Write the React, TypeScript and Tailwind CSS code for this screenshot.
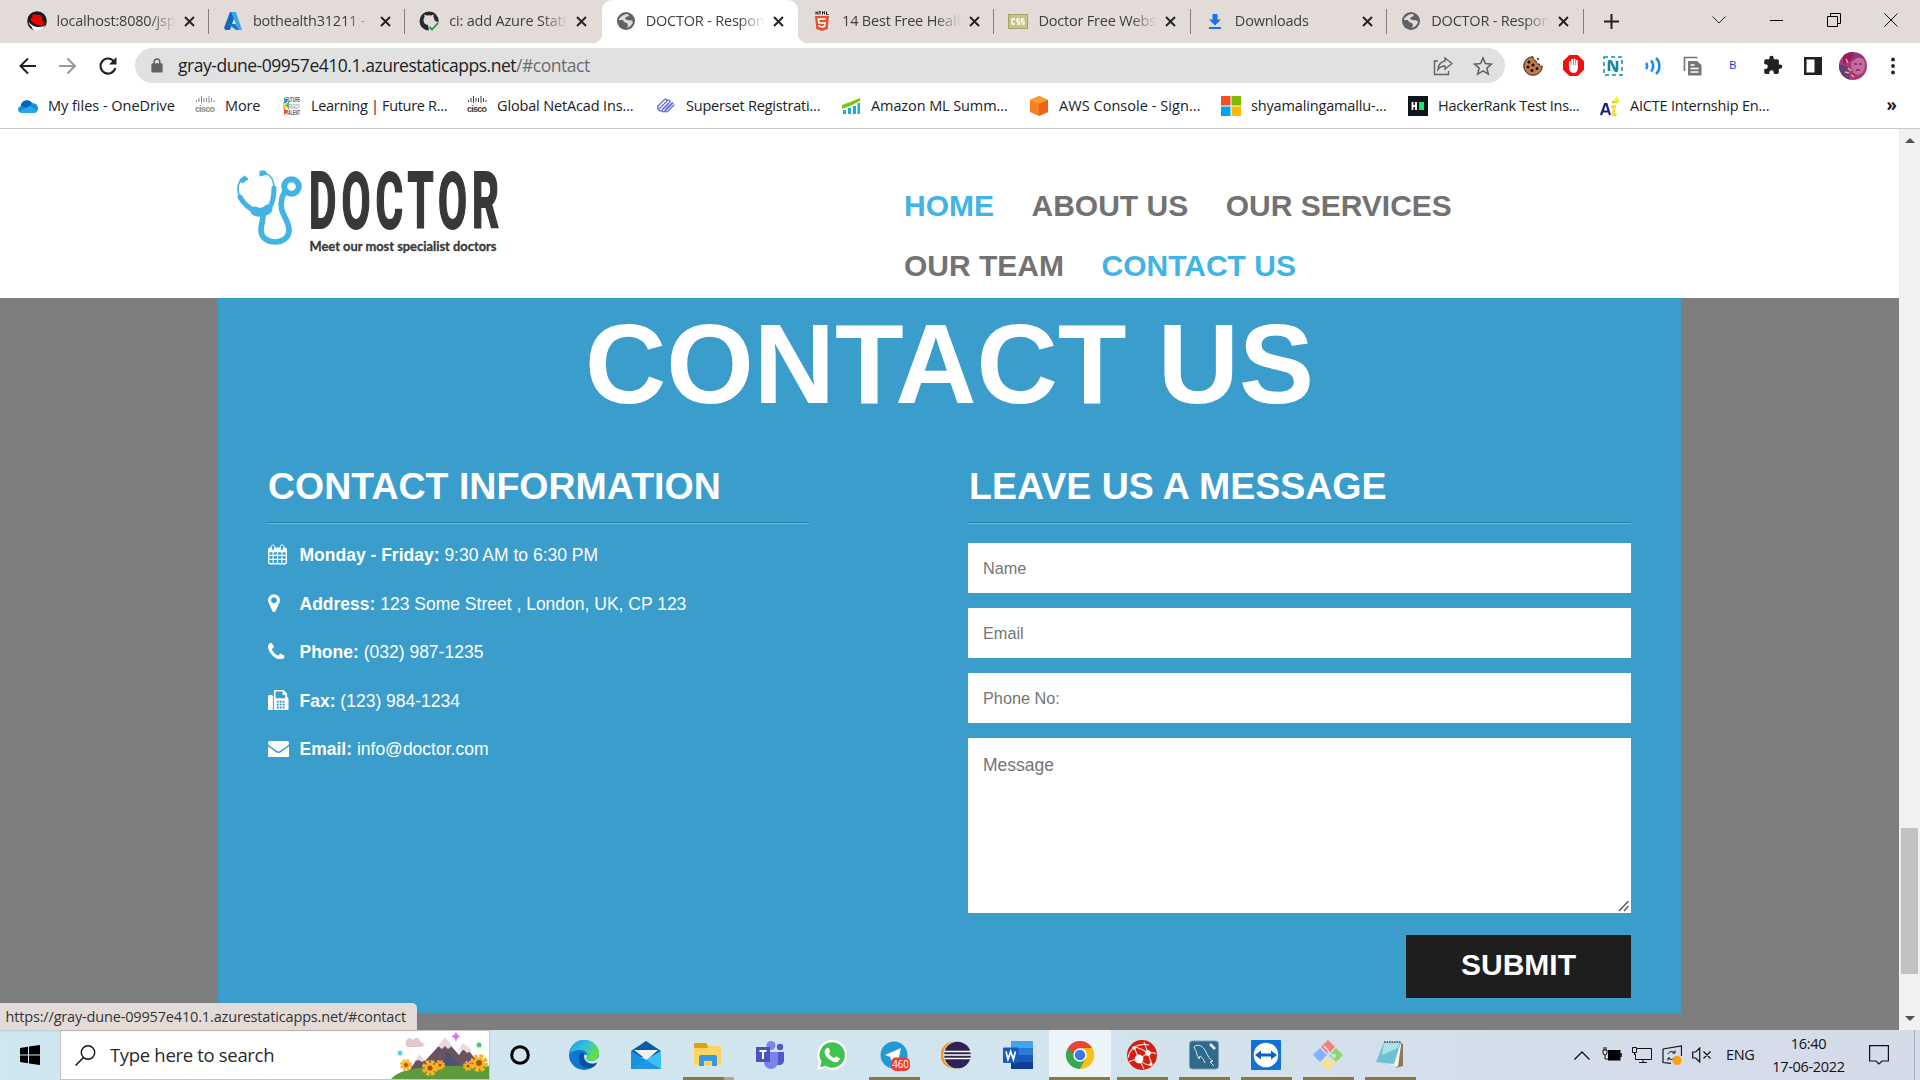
import React from "react";
import type { ReactNode } from "react";

const Globe = () => (
  <svg viewBox="0 0 20 20" className="size-5">
    <circle cx="10" cy="10" r="9" fill="#5f6368" />
    <path d="M3 8C5 5 8 3 12 3l1 2-3 1-1 2 3 1 3 0 2 2c-1 3-3 5-6 6l1-3-1-2-3-1-1-2-4 0z" fill="#e3dbd8" />
    <path d="M10 6l4 .5 2 2.500-3 .5-3-1.500z" fill="#5f6368" />
  </svg>
);

const RedHat = () => (
  <svg viewBox="0 0 20 20" className="size-5">
    <circle cx="10" cy="10" r="9.800" fill="#1a1a1a" />
    <path d="M1.500 10.500C4 15 10 17 16.500 15.500l1.500-1.500c0 3-4 6-8 6-3 0-5-2-5.500-4.500-1.500-1-2.500-3-3-5z" fill="#fff" />
    <path d="M5.500 4c2-1.500 3-.5 4.500 0s3-1 4.500 1l1 4.500c2.500 1.500 3 3.500 1 4.500-4 1.500-10-1-13-5 0-1.500 1-2 1.300-2z" fill="#e00" />
  </svg>
);

const AzureLogo = () => (
  <svg viewBox="0 0 20 20" className="size-5">
    <path d="M7 1h6L7 19H2.500L1 17z" fill="#1467b8" />
    <path d="M8 1h5l6 18h-5L7 13h6z" fill="#35a8ee" />
    <path d="M5 13h7l4 6h-3z" fill="#1b78d0" />
  </svg>
);

const GithubCheck = () => (
  <svg viewBox="0 0 20 20" className="size-5">
    <path fillRule="evenodd" d="M10 .5a9.500 9.500 0 1 0 0 19l-1-5.500C6 13.500 4.500 12 4.500 9c0-1 .4-2 1-2.800L5.400 3.500l2.400 1a9 9 0 0 1 4.400 0l2.400-1-.1 2.700c.8 1 1 2 1 3.300l3.900 2A9.500 9.500 0 0 0 10 .5z" fill="#24292f" />
    <path d="M10.500 16l2.500 2.500 6-6.500" fill="none" stroke="#1f9d3a" strokeWidth="1.800" />
  </svg>
);

const Html5 = () => (
  <svg viewBox="0 0 20 20" className="size-5">
    <path d="M4 .5v3M4 2h2M6 .5v3M8 .5v3M7 .8h2M10.500 3.500v-3l1 1.500 1-1.500v3M14.500 .5v3h2" stroke="#222" fill="none" />
    <path d="M3 5h14l-1.300 13L10 20l-5.700-2z" fill="#e5532d" />
    <path d="M13.500 8h-7l.3 4h6.200l-.4 3.200-2.600.9-2.600-.9-.1-1.200" fill="none" stroke="#fff" strokeWidth="1.700" />
  </svg>
);

const CssIcon = () => (
  <svg viewBox="0 0 20 20" className="size-5">
    <rect x=".5" y="3.500" width="19" height="14" fill="#c3c58b" stroke="#a3a563" />
    <path d="M7 8H4v5h3M11.500 8H9v2.500h2.500V13H9M16 8h-2.500v2.500H16V13h-2.500" fill="none" stroke="#fff" strokeWidth="1.300" />
  </svg>
);

const DownloadIcon = () => (
  <svg viewBox="0 0 20 20" className="size-5">
    <path d="M7.500 3h5v5.500h3.500L10 14.500 4 8.500h3.500zM4 16h12v2H4z" fill="#1a73e8" />
  </svg>
);

const Cross = ({ className = "size-[11px]" }: { className?: string }) => (
  <svg viewBox="0 0 11 11" className={className}>
    <path d="M1 1l9 9M10 1l-9 9" stroke="#202124" strokeWidth="1.900" />
  </svg>
);

const tabs: { icon: ReactNode; title: string; active?: boolean; sep?: boolean }[] = [
  { icon: <RedHat />, title: "localhost:8080/jsp", sep: true },
  { icon: <AzureLogo />, title: "bothealth31211 - ", sep: true },
  { icon: <GithubCheck />, title: "ci: add Azure Stati" },
  { icon: <Globe />, title: "DOCTOR - Respon", active: true },
  { icon: <Html5 />, title: "14 Best Free Healt", sep: true },
  { icon: <CssIcon />, title: "Doctor Free Webs", sep: true },
  { icon: <DownloadIcon />, title: "Downloads", sep: true },
  { icon: <Globe />, title: "DOCTOR - Respon", sep: true },
];

function TabStrip() {
  return (
    <div className="flex h-[43px] bg-[#e3dbd8] pl-[12.500px]">
      {tabs.map((t, i) => (
        <div
          key={i}
          className={
            "relative flex h-[43px] w-[196.4px] shrink-0 items-center pb-px pl-[14px] " +
            (t.active ? "rounded-t-[10px] bg-white" : "")
          }
        >
          {t.active && (
            <>
              <span className="absolute bottom-0 -left-[10px] size-[10px] bg-[radial-gradient(circle_at_0_0,#e3dbd8_10px,#fff_10.500px)]" />
              <span className="absolute -right-[10px] bottom-0 size-[10px] bg-[radial-gradient(circle_at_100%_0,#e3dbd8_10px,#fff_10.500px)]" />
            </>
          )}
          {t.icon}
          <span className="ml-[10px] w-[119px] overflow-hidden [mask-image:linear-gradient(90deg,#000_78%,transparent)] pb-px text-[14.500px] tracking-[-0.200px] whitespace-nowrap text-[#3c4043]">
            {t.title}
          </span>
          <span className="ml-[8px]">
            <Cross />
          </span>
          {t.sep && <span className="absolute top-[9px] right-0 h-[25px] w-px bg-[#85807e]" />}
        </div>
      ))}
      <div className="flex flex-1 items-center pl-[20px]">
        <svg viewBox="0 0 15 15" className="size-[15px]">
          <path d="M7.500 0v15M0 7.500h15" stroke="#202124" strokeWidth="2" />
        </svg>
        <div className="ml-auto flex h-9 items-center pb-[3px]">
          <svg viewBox="0 0 14 8" className="mr-[44px] h-2 w-[14px]">
            <path d="M.5 .5L7 7l6.500-6.500" stroke="#222" fill="none" />
          </svg>
          <span className="mr-[44px] h-px w-[13px] bg-black" />
          <svg viewBox="0 0 14 14" className="mr-[43px] size-[14px]">
            <path d="M.5 3.500h10v10H.5zM3.500 3V.5h10v10H11" stroke="#000" fill="none" />
          </svg>
          <svg viewBox="0 0 14 14" className="mr-[22px] size-[14px]">
            <path d="M.5 .5l13 13M13.500 .5l-13 13" stroke="#111" fill="none" />
          </svg>
        </div>
      </div>
    </div>
  );
}

const extensions: ReactNode[] = [
  <svg viewBox="0 0 20 20" className="size-5">
    <path d="M10 .7a9.300 9.300 0 1 0 9.300 9.500c-2 .6-3-.8-3-2.200-2 .5-3.500-1-3-3C11.500 5 10 3 10 .7z" fill="#c07b4b" stroke="#3a2010" />
    <g fill="#111">
      <circle cx="6" cy="6" r="1.500" /><circle cx="10" cy="9" r="1.500" /><circle cx="5" cy="11" r="1.500" />
      <circle cx="9" cy="14.500" r="1.600" /><circle cx="14" cy="12.500" r="1.500" /><circle cx="15" cy="3" r="1" />
    </g>
  </svg>,
  <svg viewBox="0 0 20 20" className="size-[21px]">
    <path d="M6 0h8l6 6v8l-6 6H6l-6-6V6z" fill="#ed1111" />
    <path d="M6.500 11V6.500M8.700 10V4.500M11 10V4.300M13.200 11V5.500" stroke="#fff" strokeWidth="1.700" strokeLinecap="round" />
    <path d="M5.700 9.500h8.400v3c0 3-1.800 4.500-4 4.500S6.500 15.500 5.700 13z" fill="#fff" />
  </svg>,
  <svg viewBox="0 0 20 20" className="size-5">
    <rect x="1" y="1" width="18" height="18" fill="none" stroke="#128c9c" strokeWidth="1.500" strokeDasharray="4 3" />
    <path d="M6 15V6.500c0-2 1.500-2 2.300-.5L12 14c.8 1.500 2 1.300 2-.5V5" fill="none" stroke="#128c9c" strokeWidth="2.600" />
  </svg>,
  <svg viewBox="0 0 20 20" className="size-5">
    <path d="M3 7c1.500 1.500 1.500 4.500 0 6M8 4.500c3 3 3 8 0 11M13 2c4.500 4 4.500 12 0 16" fill="none" stroke="#1a8cf0" strokeWidth="2.600" />
  </svg>,
  <svg viewBox="0 0 20 20" className="size-5">
    <path d="M1.500 15V1.500h13" fill="none" stroke="#777" strokeWidth="1.700" />
    <path d="M5 5h9l4.500 4v10.500H5z" fill="#777" />
    <path d="M7.500 9h4M7.500 12.500h8M7.500 16h8" stroke="#fff" strokeWidth="1.400" />
  </svg>,
  <span className="font-['Liberation_Sans'] text-[11px] text-[#3730c8]">B</span>,
  <svg viewBox="0 0 24 24" className="size-[24px]">
    <path d="M20.500 11H19V7c0-1.100-.9-2-2-2h-4V3.500a2.500 2.500 0 0 0-5 0V5H4c-1.100 0-2 .9-2 2v3.800h1.500a2.700 2.700 0 0 1 0 5.400H2V20c0 1.100.9 2 2 2h3.800v-1.500a2.700 2.700 0 0 1 5.400 0V22H17c1.100 0 2-.9 2-2v-4h1.500a2.500 2.500 0 0 0 0-5z" fill="#202124" transform="translate(1.500 1) scale(.86)" />
  </svg>,
  <svg viewBox="0 0 18 18" className="size-[18px]">
    <path fillRule="evenodd" d="M0 0h18v18H0zM2.500 2.500v13h8v-13z" fill="#202124" />
  </svg>,
  <svg viewBox="0 0 28 28" className="size-7">
    <defs><clipPath id="avatarClip"><circle cx="14" cy="14" r="14" /></clipPath></defs>
    <g clipPath="url(#avatarClip)">
      <path d="M0 0h28v28H0z" fill="#a83a72" />
      <path d="M0 12l9 3 2 13H0z" fill="#62406f" />
      <path d="M4 0h11l-3 9-8 3z" fill="#9c1c58" />
      <ellipse cx="19" cy="13" rx="7" ry="10" fill="#c76a9c" />
      <path d="M12 6c3-5 10-6 14 0l-2 1c-4-2-8-2-10 3z" fill="#8a3a78" />
      <path d="M15 12h3M20 12h3M17 18h4" stroke="#7c2c60" strokeWidth="1.500" />
      <path d="M7 7l2 4M9 16l3 3M6 20l4 1M12 23l3 2" stroke="#e8a4c8" strokeWidth="1.500" />
    </g>
  </svg>,
  <svg viewBox="0 0 4 18" className="h-[18px] w-1">
    <circle cx="2" cy="2.500" r="1.900" fill="#202124" /><circle cx="2" cy="9" r="1.900" fill="#202124" /><circle cx="2" cy="15.500" r="1.900" fill="#202124" />
  </svg>,
];

function Toolbar() {
  return (
    <div className="flex h-[45px] items-center bg-white pl-[18px]">
      <svg viewBox="0 0 20 20" className="size-5">
        <path d="M18 10H3M10 2.500L2.500 10l7.500 7.500" stroke="#202124" strokeWidth="2" fill="none" />
      </svg>
      <svg viewBox="0 0 20 20" className="ml-5 size-5">
        <path d="M1 10h15M9.500 2.500L17 10l-7.500 7.500" stroke="#9a9a9a" strokeWidth="2" fill="none" />
      </svg>
      <svg viewBox="0 0 20 20" className="ml-5 size-5">
        <path d="M16 5.500A7.500 7.500 0 1 0 17.300 12" stroke="#202124" strokeWidth="2.100" fill="none" />
        <path d="M18.500 1v7.500H11z" fill="#202124" />
      </svg>
      <div className="ml-[17px] flex h-[35px] w-[1370px] items-center rounded-full bg-[#e1e1e1] pl-[16px]">
        <svg viewBox="0 0 12 16" className="h-[15px] w-3">
          <path d="M3 6V4a3 3 0 0 1 6 0v2" fill="none" stroke="#5f6368" strokeWidth="1.600" />
          <rect y="5.500" width="12" height="10" rx="1.500" fill="#5f6368" />
        </svg>
        <span className="ml-[15px] text-[17.500px] tracking-[-0.470px] text-[#202124]">
          gray-dune-09957e410.1.azurestaticapps.net<span className="text-[#6a6d70]">/#contact</span>
        </span>
        <svg viewBox="0 0 20 20" className="mr-5 ml-auto size-5">
          <path d="M5 5H1.500v13.500h14V15" fill="none" stroke="#5f6368" strokeWidth="1.400" />
          <path d="M12 2l7 5.500-7 5.500V10c-3 0-5 .7-7 3.500C5.500 9 8 5.500 12 5z" fill="none" stroke="#5f6368" strokeWidth="1.400" />
        </svg>
        <svg viewBox="0 0 20 20" className="mr-[12px] size-5">
          <path d="M10 2l2.400 5.600 6.100.5-4.600 4 1.400 6L10 14.900 4.700 18.100l1.400-6-4.600-4 6.100-.5z" fill="none" stroke="#5f6368" strokeWidth="1.600" />
        </svg>
      </div>
      <div className="ml-[8px] flex">
        {extensions.map((e, i) => (
          <span key={i} className="flex h-8 w-10 items-center justify-center">{e}</span>
        ))}
      </div>
    </div>
  );
}

const Cisco = ({ color }: { color: string }) => (
  <svg viewBox="0 0 20 20" className="size-5">
    <path d="M1.500 4v2M4 2v4M6.500 0v7M9 2v4M11.500 2v4M14 0v7M16.500 2v4M19 4v2" stroke={color} strokeWidth="1" />
    <text x="0" y="15.500" fontSize="9" fontWeight="700" fontFamily="Liberation Sans" fill={color} textLength="20">cisco</text>
  </svg>
);

const bookmarks: { icon: ReactNode; label: string; width: string; track?: string }[] = [
  {
    label: "My files - OneDrive", width: "w-[177px]", track: "tracking-[-0.020px]",
    icon: (
      <svg viewBox="0 0 20 20" className="size-5">
        <path d="M3 10a6 6 0 0 1 11-3c4 0 6 3 6 5.500S18 17 16 17H4c-5 0-5-6-1-7z" fill="#1490df" />
        <path d="M3 10a6 6 0 0 1 11-3l-4 5z" fill="#0364b8" />
        <path d="M2 15l10-5 7 5c-1 1.500-2 2-3 2H4c-1 0-2-1-2-2z" fill="#28a8ea" />
      </svg>
    ),
  },
  { label: "More", width: "w-[86px]", icon: <Cisco color="#8a8a8a" /> },
  {
    label: "Learning | Future R...", width: "w-[186px]", track: "tracking-[-0.320px]",
    icon: (
      <svg viewBox="0 0 20 20" className="size-5">
        <path d="M3 1l4 4-4 4z" fill="#2c9fdb" /><path d="M2 6l5 4-5 4z" fill="#f4d21f" /><path d="M3 12l4 4-4 3z" fill="#e9513a" /><path d="M5 9l3-4v9z" fill="#49b749" />
        <g fontSize="6.500" fontWeight="700" fontFamily="Liberation Sans" fill="#555">
          <text x="5" y="6" textLength="14" lengthAdjust="spacingAndGlyphs">FUTURE</text>
          <text x="7" y="12.500" fill="#aaa" textLength="12" lengthAdjust="spacingAndGlyphs">READY</text>
          <text x="5" y="19" textLength="14" lengthAdjust="spacingAndGlyphs">TALENT</text>
        </g>
      </svg>
    ),
  },
  { label: "Global NetAcad Ins...", width: "w-[189px]", icon: <Cisco color="#3c3c3c" /> },
  {
    label: "Superset Registrati...", width: "w-[185px]", track: "tracking-[-0.200px]",
    icon: (
      <svg viewBox="0 0 20 20" className="size-5">
        <g fill="none" stroke="#6b6be0" strokeWidth="1.300" strokeLinecap="round">
          <path d="M2 10l6-6c2-2 4 0 2 2l-6 6M3 13l8-8c2-2 4 0 2.500 1.500L7 13" />
          <path d="M18 9l-6 6c-2 2-4 0-2-2l6-6M17 7l-8 8c-2 2-4 0-2.500-1.500L12 8M2 10c-1 3 1 5 3 5" />
        </g>
      </svg>
    ),
  },
  {
    label: "Amazon ML Summ...", width: "w-[188px]", track: "tracking-[-0.100px]",
    icon: (
      <svg viewBox="0 0 20 20" className="size-5">
        <path d="M1 9l8-3 10-4v3L9 10l-8 3z" fill="#7ac814" />
        <path d="M2 14h3v4H2zM7 12h3v6H7zM12 10h3v8h-3zM16.500 7h2.500v11h-2.500z" fill="#1aaecf" />
      </svg>
    ),
  },
  {
    label: "AWS Console - Sign...", width: "w-[192px]", track: "tracking-[0.050px]",
    icon: (
      <svg viewBox="0 0 20 20" className="size-5">
        <path d="M10 0l9 4v12l-9 4-9-4V4z" fill="#f58220" /><path d="M10 0l9 4-9 4-9-4z" fill="#fa9b2d" /><path d="M10 8l9-4v12l-9 4z" fill="#e8641b" />
      </svg>
    ),
  },
  {
    label: "shyamalingamallu-...", width: "w-[187px]",
    icon: (
      <svg viewBox="0 0 20 20" className="size-5">
        <path d="M0 0h9.500v9.500H0z" fill="#f25022" /><path d="M10.500 0H20v9.500h-9.500z" fill="#7fba00" /><path d="M0 10.500h9.500V20H0z" fill="#00a4ef" /><path d="M10.500 10.500H20V20h-9.500z" fill="#ffb900" />
      </svg>
    ),
  },
  {
    label: "HackerRank Test Ins...", width: "w-[192px]", track: "tracking-[-0.300px]",
    icon: (
      <svg viewBox="0 0 20 20" className="size-5">
        <path d="M0 0h20v20H0z" fill="#0e141e" /><path d="M4.500 6v8M8 6v8M4.500 10H8" stroke="#fff" strokeWidth="1.900" /><path d="M11 6h5v8h-5z" fill="#1ee86a" />
      </svg>
    ),
  },
  {
    label: "AICTE Internship En...", width: "w-[170px]", track: "tracking-[-0.200px]",
    icon: (
      <svg viewBox="0 0 20 20" className="size-5">
        <path d="M1 19L5 8h1.500L10 19M2.500 15.500h6" stroke="#1c1c84" strokeWidth="2.200" fill="none" />
        <path d="M11 10.500h3.500L13 18.500h3.500M12 6h4l1-3" stroke="#d9ce28" strokeWidth="2.600" fill="none" />
        <path d="M16.500 0l3.500 6-6-.5z" fill="#f4ec1c" />
        <path d="M11 10h3.500L13 18h3.500" stroke="#f4ec1c" strokeWidth="1.600" fill="none" />
      </svg>
    ),
  },
];

function BookmarksBar() {
  return (
    <div className="flex h-[41px] items-center border-b border-[#c9c9c9] bg-white pb-[4px] pl-[18px]">
      {bookmarks.map((b) => (
        <div key={b.label} className={"flex shrink-0 items-center gap-[10px] " + b.width}>
          <span className="shrink-0">{b.icon}</span>
          <span className={"pb-px text-[14.500px] whitespace-nowrap text-[#202124] " + (b.track ?? "tracking-[-0.150px]")}>{b.label}</span>
        </div>
      ))}
      <span className="mr-[23px] ml-auto pb-[3px] text-[17px] font-bold text-[#202124]">»</span>
    </div>
  );
}

const Logo = () => (
  <svg viewBox="0 0 264 86" className="h-[86px] w-[264px]">
    <g fill="none" stroke="#42b3e5">
      <path d="M5 11C0 14 0 22 3 28M26 4c8 1 11 8 11 15" strokeWidth="1.700" />
      <path d="M3 28c4 7 9 11 14 13.500M37 19c0 8-1 15-5 20" strokeWidth="5" strokeLinecap="round" />
      <path d="M18 42c4 2 9 2 13-2" strokeWidth="9" strokeLinecap="round" />
      <path d="M26 46c0 7-2 10-2 15 0 16 28 16 28 0 0-12-11-16-7-32l3-7" strokeWidth="5.700" />
      <circle cx="54.500" cy="17.500" r="7.300" strokeWidth="6" />
      <path d="M2.500 11l5-4 3.500 3-5.500 4zM23 2l5 0 2 3-7 2z" fill="#42b3e5" strokeWidth="1" />
    </g>
    <g transform="translate(72 59) scale(.54 1)">
      <text fontFamily="Roboto" fontWeight="700" fontSize="78" fill="#383838" stroke="#383838" strokeWidth="2" textLength="352">DOCTOR</text>
    </g>
    <text x="72.500" y="82" fontFamily="Lato" fontWeight="700" fontSize="12.500" fill="#3a3a3a" stroke="#3a3a3a" strokeWidth=".3" textLength="187" lengthAdjust="spacingAndGlyphs">Meet our most specialist doctors</text>
  </svg>
);

const navItems = [
  { label: "HOME", on: true },
  { label: "ABOUT US" },
  { label: "OUR SERVICES" },
  { label: "OUR TEAM" },
  { label: "CONTACT US", on: true },
];

function SiteHeader() {
  return (
    <header className="flex h-[169px] bg-white">
      <div className="w-[904px] pt-[40px] pl-[237px]">
        <Logo />
      </div>
      <nav className="flex w-[640px] flex-wrap content-start gap-x-[37.500px] pt-[47px]">
        {navItems.map((n) => (
          <a
            key={n.label}
            className={"text-[30px] leading-[60px] font-bold " + (n.on ? "text-[#42b3e5]" : "text-[#727272]")}
          >
            {n.label}
          </a>
        ))}
      </nav>
    </header>
  );
}

const info: { icon: ReactNode; name: string; value: string }[] = [
  {
    name: "Monday - Friday:", value: "9:30 AM to 6:30 PM",
    icon: (
      <svg viewBox="0 0 20 21" className="-mt-[2px] h-[21px] w-[19px]">
        <path fillRule="evenodd" d="M1.500 3h17L20 4.500v15L18.500 21h-17L0 19.500v-15zM1.500 8v2.800h3.300V8zM6 8v2.800h3.400V8zM10.600 8v2.800H14V8zM15.200 8v2.800h3.300V8zM1.500 12v3h3.300v-3zM6 12v3h3.400v-3zM10.600 12v3H14v-3zM15.200 12v3h3.300v-3zM1.500 16.200v3.300h3.300v-3.300zM6 16.200v3.300h3.400v-3.300zM10.600 16.200v3.300H14v-3.300zM15.200 16.200v3.300h3.300v-3.300z" fill="#fff" />
        <rect x="3.500" y=".5" width="3.500" height="5.500" rx="1.500" fill="#3b9dcb" stroke="#fff" />
        <rect x="13" y=".5" width="3.500" height="5.500" rx="1.500" fill="#3b9dcb" stroke="#fff" />
      </svg>
    ),
  },
  {
    name: "Address:", value: "123 Some Street , London, UK, CP 123",
    icon: (
      <svg viewBox="0 128 1024 1536" className="-mt-[2px] h-[18.500px] w-[12px]">
        <path fill="#fff" d="M768 640q0-106-75-181t-181-75-181 75-75 181 75 181 181 75 181-75 75-181zm256 0q0 109-33 179l-364 774q-16 33-47.500 52t-67.500 19-67.500-19-46.500-52l-365-774q-33-70-33-179 0-212 150-362t362-150 362 150 150 362z" />
      </svg>
    ),
  },
  {
    name: "Phone:", value: "(032) 987-1235",
    icon: (
      <svg viewBox="0 128 1408 1408" className="-mt-[3px] size-[16.500px]">
        <path fill="#fff" d="M1408 1240q0 27-10 70.500t-21 68.500q-21 50-122 106-94 51-186 51-27 0-53-3.500t-57.500-12.500-47-14.500-55.500-20.500-49-18q-98-35-175-83-127-79-264-216t-216-264q-48-77-83-175-3-9-18-49t-20.500-55.500-14.500-47-12.500-57.500-3.500-53q0-92 51-186 56-101 106-122 25-11 68.500-21t70.500-10q14 0 21 3 18 6 53 76 11 19 30 54t35 63.500 31 53.500q3 4 17.500 25t21.500 35.500 7 28.500q0 20-28.500 50t-62 55-62 53-28.500 46q0 9 5 22.500t8.500 20.500 14 24 11.500 19q76 137 174 235t235 174q2 1 19 11.500t24 14 20.500 8.500 22.500 5q18 0 46-28.500t53-62 55-62 50-28.500q14 0 28.500 7t35.500 21.500 25 17.500q25 15 53.500 31t63.500 35 54 30q70 35 76 53 3 7 3 21z" />
      </svg>
    ),
  },
  {
    name: "Fax:", value: "(123) 984-1234",
    icon: (
      <svg viewBox="0 0 21 21" className="-mt-[2px] size-[20.500px]">
        <rect y="5" width="5" height="16" rx="1.700" fill="#fff" />
        <path fillRule="evenodd" d="M6 1.500Q6 0 7.500 0H16l3.500 3.500V7Q21 7.500 21 9v10.500q0 1.500-1.500 1.500h-12Q6 21 6 19.500zM7.700 1.500v7h10V5H15V1.500zM9 11v2h2v-2zM12 11v2h2v-2zM15 11v2h2v-2zM9 14v2h2v-2zM12 14v2h2v-2zM15 14v2h2v-2zM9 17v2h2v-2zM12 17v2h2v-2zM15 17v2h2v-2z" fill="#fff" />
      </svg>
    ),
  },
  {
    name: "Email:", value: "info@doctor.com",
    icon: (
      <svg viewBox="0 256 1792 1408" className="-mt-px h-[16.500px] w-[21px]">
        <path fill="#fff" d="M1792 710v794q0 66-47 113t-113 47h-1472q-66 0-113-47t-47-113v-794q44 49 101 87 362 246 497 345 57 42 92.500 65.500t94.500 48 110 24.500h2q51 0 110-24.500t94.500-48 92.500-65.500q170-123 498-345 57-39 100-87zm0-294q0 79-49 151t-122 123q-376 261-468 325-10 7-42.500 31t-54 38.500-52 32.500-57.500 27-50 9h-2q-23 0-50-9t-57.500-27-52-32.500-54-38.500-42.500-31q-91-64-262-182.500t-205-142.500q-62-42-117-115.500t-55-136.500q0-78 41.500-130t118.500-52h1472q65 0 112.500 47t47.500 113z" />
      </svg>
    ),
  },
];

function ContactSection() {
  return (
    <section className="mx-auto h-[715px] w-[1463px] bg-[#3b9dcb] px-[50px] text-white">
      <h1 className="text-center text-[112.500px] leading-[132px] font-bold">CONTACT US</h1>
      <div className="mt-[33px] flex justify-between">
        <div className="w-[541px]">
          <h2 className="h-[60px] border-b border-[#16809c] pt-px text-[37.500px] leading-[44px] font-bold whitespace-nowrap">CONTACT INFORMATION</h2>
          <div className="h-px bg-[#5cc6e6]" />
          <ul className="pt-[7px]">
            {info.map((r) => (
              <li key={r.name} className="flex h-[48.500px] items-center text-[17.500px]">
                <span className="w-[31.500px]">{r.icon}</span>
                <span><b>{r.name}</b> {r.value}</span>
              </li>
            ))}
          </ul>
        </div>
        <div className="w-[663px]">
          <h2 className="h-[60px] border-b border-[#16809c] pt-px pl-px text-[37.500px] leading-[44px] font-bold whitespace-nowrap">LEAVE US A MESSAGE</h2>
          <div className="h-px bg-[#5cc6e6]" />
          <form className="flex flex-col gap-[15px] pt-[19px]">
            {["Name", "Email", "Phone No:"].map((p) => (
              <input key={p} placeholder={p} className="h-[50px] bg-white px-[15px] text-[16.250px] placeholder:text-[#757575]" />
            ))}
            <div className="relative h-[175px]">
              <textarea placeholder="Message" className="h-full w-full resize-none bg-white px-[15px] pt-[14px] text-[17.500px] placeholder:text-[#757575]" />
              <svg viewBox="0 0 12 12" className="absolute right-[1px] bottom-[1px] size-3">
                <path d="M1 11L10.500 1M6 11l4.500-5" stroke="#555" strokeWidth="1.300" />
              </svg>
            </div>
            <button type="button" className="mt-[7px] ml-auto h-[63px] w-[225px] bg-[#1e1e1e] pb-[4px] text-[30px] font-bold">SUBMIT</button>
          </form>
        </div>
      </div>
    </section>
  );
}

type AppEntry = { icon: ReactNode; mark?: "on" | "active" | "split" };

const apps: AppEntry[] = [
  { icon: <svg viewBox="0 0 30 30" className="size-[30px]"><circle cx="13" cy="15" r="8.300" fill="none" stroke="#000" strokeWidth="3" /></svg> },
  {
    icon: (
      <svg viewBox="0 0 30 30" className="size-[30px]">
        <defs>
          <linearGradient id="edgeTop" x1="0" x2="1" y1="0" y2=".6"><stop stopColor="#1f9be6" /><stop offset=".5" stopColor="#32c1dc" /><stop offset="1" stopColor="#66e03c" /></linearGradient>
        </defs>
        <circle cx="15" cy="15" r="15" fill="#0c78d4" />
        <path d="M0 14C1 5 8 0 15 0c9 0 15 6 15 13 0 5-4 8-8 8-3 0-5-1-4-3 2-5-2-8-7-8-6 0-10 3-11 4z" fill="url(#edgeTop)" />
        <path d="M11 14c-4 8 3 16 11 14 3-1 5-3 6-5-8 3-15-1-13-9 0-1-3-2-4 0z" fill="#0b4f9c" />
        <path d="M18 17c-1.500 2 0 4 4 4 3 0 6-1.500 8-4.500V24l-2-1.500c-6 2.500-13 0-13-7 1-2 4-1 3 1.500z" fill="#d0e5ed" />
      </svg>
    ),
  },
  {
    icon: (
      <svg viewBox="0 0 30 30" className="size-[30px]">
        <path d="M0 11L15 1l15 10v6H0z" fill="#0a5ba8" /><path d="M3 10h24L16 20z" fill="#f1f1f1" />
        <path d="M0 11l15 9L30 11v18H0z" fill="#2aa9ea" /><path d="M0 29l15-9 15-9v18z" fill="#39c0f5" /><path d="M0 29V11l30 18z" fill="#168bdd" opacity=".75" />
      </svg>
    ),
  },
  {
    mark: "split",
    icon: (
      <svg viewBox="0 0 30 30" className="size-[30px]">
        <path d="M1 4q0-1 1-1h11l2 3v5H1z" fill="#e0a010" /><path d="M1 8h13l2-2h12v19H1z" fill="#fcd462" /><path d="M6 26V17q0-2 2-2h14q2 0 2 2v9h-5v-5h-8v5z" fill="#3a96dd" />
      </svg>
    ),
  },
  {
    icon: (
      <svg viewBox="0 0 30 30" className="size-[30px]">
        <circle cx="16" cy="5.500" r="4.500" fill="#7b83eb" /><circle cx="25" cy="7" r="3.200" fill="#5059c9" />
        <path d="M20 12h9v9a5 5 0 0 1-9 2z" fill="#5059c9" /><path d="M9 12h14v10a7 7 0 0 1-14 0z" fill="#7b83eb" /><path d="M1 7h14v15H1z" fill="#4b53bc" />
        <path d="M4.500 11h7M8 11v8" stroke="#fff" strokeWidth="2" />
      </svg>
    ),
  },
  {
    icon: (
      <svg viewBox="0 0 30 30" className="size-[30px]">
        <path d="M15 0a15 15 0 1 1-7 28L0 30l2-8A15 15 0 0 1 15 0z" fill="#fff" />
        <path d="M15 2.300a12.700 12.700 0 1 1-6.500 23.500L3 27.300l1.500-5.500A12.700 12.700 0 0 1 15 2.300z" fill="#40c351" />
        <path d="M10 8c2-1 2 0 3 3 .5 1-1 1.500-1 2.500 1 2 3 4 5 4.500 1 0 1.500-2 2.500-1.500 3 1.500 3.500 1.500 3 3-1 2.500-3 3-5 2.500C12 20.500 8 16 7.500 12c0-2 1-3 2.500-4z" fill="#fff" />
      </svg>
    ),
  },
  {
    mark: "on",
    icon: (
      <svg viewBox="0 0 32 32" className="size-[32px]">
        <circle cx="16" cy="16" r="13.500" fill="#2399d6" />
        <path d="M7 16l16-7-3 14-5-3.500-2 2.500-.5-4z" fill="#fff" />
        <rect x="13" y="18.500" width="19" height="13.500" rx="5" fill="#ee3d35" />
        <text x="14.300" y="29" fontSize="10.500" fontFamily="Open Sans" fill="#fff" textLength="16.500" lengthAdjust="spacingAndGlyphs">460</text>
      </svg>
    ),
  },
  {
    icon: (
      <svg viewBox="0 0 30 30" className="size-[30px]">
        <circle cx="13" cy="15" r="13.500" fill="#f7941e" /><circle cx="16" cy="15" r="13.700" fill="#d5e6ee" /><circle cx="16.500" cy="15" r="13.300" fill="#2c2255" />
        <path d="M3 11.500h27M3 15h27M3 18.500h27" stroke="#fff" strokeWidth="1.700" />
      </svg>
    ),
  },
  {
    icon: (
      <svg viewBox="0 0 30 30" className="size-[30px]">
        <path d="M8 1h22v7.500H8z" fill="#41a5ee" /><path d="M8 8h22v7.500H8z" fill="#2b7cd3" /><path d="M8 15h22v7.500H8z" fill="#185abd" /><path d="M8 22h22v7H8z" fill="#103f91" />
        <rect x="0" y="7.500" width="15.500" height="15.500" rx="1" fill="#185abd" />
        <path d="M3 11.500l2 8 2.700-8 2.700 8 2-8" fill="none" stroke="#fff" strokeWidth="1.700" />
      </svg>
    ),
  },
  {
    mark: "active",
    icon: (
      <svg viewBox="0 0 48 48" className="size-[28px]">
        <path d="M24 24L3.200 12A24 24 0 0 1 44.800 12z" fill="#ea4335" />
        <path d="M24 24l20.800-12A24 24 0 0 1 24 48z" fill="#fbc116" />
        <path d="M24 24V48A24 24 0 0 1 3.200 12z" fill="#34a853" />
        <path d="M24 12h20.800L34 30z" fill="#fbc116" /><path d="M14 30L3.200 12 24 12z" fill="#ea4335" /><path d="M14 30l20.500 0L24 48z" fill="#34a853" />
        <path d="M3.200 12L14 30A12 12 0 0 1 13 22z" fill="#34a853" /><path d="M34 30L24 48A24 24 0 0 0 44.800 12H30z" fill="#fbc116" />
        <circle cx="24" cy="24" r="11.500" fill="#fff" /><circle cx="24" cy="24" r="9" fill="#3b78e7" />
      </svg>
    ),
  },
  {
    mark: "on",
    icon: (
      <svg viewBox="0 0 30 30" className="size-[30px]">
        <circle cx="15" cy="15" r="15" fill="#d32010" />
        <path d="M12 19L7 7M12 19L21 13M21 13L17 2M7 7Q14 3 22 5M7 7Q2 12 1 18M12 19Q5 20 2 22M12 19L17 29M21 13Q27 12 29 14M21 13L25 25M25 25Q18 26 12 19M7 7Q14 8 21 13" fill="none" stroke="#f6dcd8" strokeWidth="1.100" />
        <circle cx="12" cy="19" r="4.400" fill="#fff" /><circle cx="21" cy="13" r="2.800" fill="#fff" /><circle cx="7" cy="8" r="1.800" fill="#fff" /><circle cx="24" cy="24" r="1.500" fill="#fff" />
      </svg>
    ),
  },
  {
    mark: "on",
    icon: (
      <svg viewBox="0 0 30 30" className="size-[30px]">
        <rect x=".5" y="1" width="29" height="28" rx="3" fill="#2f6a8c" stroke="#7f9db2" />
        <path d="M5 7c4-4 9-1 12 5 2 4 3 7 7 9l-3 1 4 4M5 7c1 3 3 4 3 8l2 4 1-3c2 1 4 4 5 7" fill="none" stroke="#dbe8f0" strokeWidth="1" />
        <path d="M21 4l5 5" stroke="#e8eef2" strokeWidth="2.600" />
      </svg>
    ),
  },
  {
    mark: "on",
    icon: (
      <svg viewBox="0 0 30 30" className="size-[30px]">
        <rect width="30" height="30" rx="1" fill="#0e72d8" /><circle cx="15" cy="15" r="12.300" fill="#fff" />
        <path d="M4 15l6-4.500v3h10v-3l6 4.500-6 4.500v-3H10v3z" fill="#0e5fc0" />
      </svg>
    ),
  },
  {
    mark: "on",
    icon: (
      <svg viewBox="0 0 30 30" className="size-[30px]">
        <path d="M15 0l7 7-7 7-7-7z" fill="#fc7c7c" /><path d="M23 8l7 7-7 7-7-7z" fill="#8ed666" /><path d="M7 8l7 7-7 7-7-7z" fill="#80b3ff" /><path d="M15 16l7 7-7 7-7-7z" fill="#ffe27d" />
        <path d="M11 6l4.500 5v10M15 12l6 4" fill="none" stroke="#d5e0ec" strokeWidth="1.700" /><circle cx="15.500" cy="21" r="2" fill="#d5e0ec" /><circle cx="21" cy="16" r="2" fill="#d5e0ec" />
      </svg>
    ),
  },
  {
    mark: "on",
    icon: (
      <svg viewBox="0 0 30 30" className="size-[30px]">
        <path d="M26 3l2 1v22l-7 2z" fill="#8c7a58" /><path d="M25 4l1 1-3 22-9-3z" fill="#f5f5f0" />
        <path d="M9 2h17l-7 22-18-2z" fill="#6fc0d2" /><path d="M9 3h16l-2 5-16 7z" fill="#a9e0ea" /><path d="M9 2h17" stroke="#6a6a6a" strokeWidth="2" strokeDasharray="1.500 1" />
      </svg>
    ),
  },
];

const Landscape = () => (
  <svg viewBox="0 0 98 48" className="h-[48px] w-[98px]">
    <path d="M15 14c-2-6 4-9 7-5 3-4 8-1 7 2 5 0 5 5 1 5H19c-2 0-4 0-4-2z" fill="#e6c6cb" />
    <path d="M18 40l10-15 6 5L54 8l14 16 6-9 20 25z" fill="#6b5260" />
    <path d="M24 30l4-7 6 6-3 2-3-2zM47 15l7-9 7 9-4 3-3-3-3 3zM67 20l5-8 9 7-5 3-3-3z" fill="#ead9dc" />
    <path d="M48 40l8-20 16 20z" fill="#45507a" opacity=".7" />
    <path d="M0 48c10-12 40-14 98-13v13z" fill="#5c9a3c" />
    <path d="M65 0c1 4 2 5 5 5-3 1-4 2-5 6-1-4-2-5-6-6 4 0 5-1 6-5z" fill="#d86ff0" />
    <circle cx="9" cy="22" r="2.500" fill="#5dd2e8" /><circle cx="88" cy="14" r="2.500" fill="#40cf6e" />
    {[[15, 34, 6], [39, 37, 8], [49, 34, 5], [77, 35, 5], [88, 32, 9]].map(([x, y, r]) => (
      <g key={x}>
        <circle cx={x} cy={y} r={r * 0.75} fill="none" stroke="#fcb322" strokeWidth={r * 0.5} strokeDasharray={`${r * 0.42} ${r * 0.17}`} />
        <circle cx={x} cy={y} r={r * 0.62} fill="#fcb322" />
        <circle cx={x} cy={y} r={r * 0.32} fill="#9a5510" />
      </g>
    ))}
  </svg>
);

function Taskbar() {
  return (
    <footer className="flex h-[50px] bg-[linear-gradient(90deg,#cfe7ee_0%,#d2e5ee_50%,#d4deea_80%,#d6dae9_100%)]">
      <div className="flex w-[60px] items-center justify-center">
        <svg viewBox="0 0 20 20" className="size-5">
          <path d="M0 3l8-1.200V9.500H0zM9 1.600L20 0v9.500H9zM0 10.500h8v7.700L0 17zM9 10.500h11V20L9 18.400z" fill="#000" />
        </svg>
      </div>
      <div className="flex w-[430px] items-center border border-[#c9c5c7] bg-white pl-[14px]">
        <svg viewBox="0 0 21 21" className="size-[21px]">
          <circle cx="13" cy="7.500" r="6.700" fill="none" stroke="#111" strokeWidth="1.400" /><path d="M8.500 12.500L.5 20.500" stroke="#111" strokeWidth="1.500" />
        </svg>
        <span className="ml-[14px] text-[18.500px] tracking-[-0.320px] text-[#2a2a2a]">Type here to search</span>
        <span className="ml-auto"><Landscape /></span>
      </div>
      <div className="flex pl-px">
        {apps.map((a, i) => (
          <div key={i} className={"relative flex w-[62px] items-center justify-center " + (a.mark === "active" ? "bg-[#edf4f8]" : "")}>
            {a.icon}
            {a.mark === "on" && <span className="absolute bottom-0 left-[6px] h-[3px] w-[51px] bg-[#85794b]" />}
            {a.mark === "active" && <span className="absolute bottom-0 left-0 h-[3px] w-[61px] bg-[#85794b]" />}
            {a.mark === "split" && <span className="absolute bottom-0 left-[6px] h-[3px] w-[51px] border-r-[10px] border-[#b3aa8d] bg-[#85794b]" />}
          </div>
        ))}
      </div>
      <div className="ml-auto flex items-center">
        <svg viewBox="0 0 16 9" className="mr-[12px] h-[9px] w-4"><path d="M.5 8.500L8 1l7.500 7.500" fill="none" stroke="#111" strokeWidth="1.300" /></svg>
        <svg viewBox="0 0 20 16" className="mr-[10px] h-4 w-5">
          <path d="M1 3v3q0 2 2 2t2-2V3zM2 0v3M4 0v3M3 8v4h3" fill="none" stroke="#111" /><rect x="6.500" y="3.500" width="11.500" height="9.500" fill="#000" stroke="#000" /><path d="M19 6v4" stroke="#000" strokeWidth="1.500" />
        </svg>
        <svg viewBox="0 0 20 18" className="mr-[10px] h-[18px] w-5">
          <path d="M5 2.500h14.500v11H3.500V8M7 16.500h8M11 13.500v3M.5 1.500h4v5h-4zM2.500 6.500V9" fill="none" stroke="#111" />
        </svg>
        <svg viewBox="0 0 20 20" className="mr-[10px] size-5">
          <path d="M1 4l18.500-3v10M1 4v13.500l8 .8" fill="none" stroke="#111" strokeWidth="1.200" />
          <path d="M6 9c1-3 5-3 7-1V5.500M13 8h-2.500M13 12c-1 3-5 3-7 1v2.500M6 13h2" fill="none" stroke="#111" />
          <circle cx="15" cy="15.500" r="4.500" fill="#ff9c06" />
        </svg>
        <svg viewBox="0 0 20 16" className="mr-[14px] h-4 w-5">
          <path d="M.7 5h3l4-4v14l-4-4h-3zM11.500 4.500l7 7M18.500 4.500l-7 7" fill="none" stroke="#111" strokeWidth="1.200" />
        </svg>
        <span className="w-[45px] text-[14.500px] tracking-[-0.300px] text-[#111]">ENG</span>
        <div className="w-[75px] text-center text-[14.500px] leading-[23px] tracking-[-0.300px] whitespace-nowrap text-[#111]">
          16:40
          <br />
          17-06-2022
        </div>
        <svg viewBox="0 0 20 20" className="ml-[23px] size-5">
          <path d="M.6 .6h18.800v15.400H13L10 19l-3-3H.6z" fill="none" stroke="#111" strokeWidth="1.200" />
        </svg>
        <span className="mr-[5px] ml-[25px] h-[50px] w-px bg-[#a9b0be]" />
      </div>
    </footer>
  );
}

export default function App() {
  return (
    <div className="flex h-[1080px] w-[1920px] flex-col overflow-hidden font-['Open_Sans',sans-serif]">
      <TabStrip />
      <Toolbar />
      <BookmarksBar />
      <div className="relative flex h-[901px]">
        <div className="w-[1899px] bg-[#7e7e7e] font-['Liberation_Sans',Arial,sans-serif]">
          <SiteHeader />
          <ContactSection />
        </div>
        <div className="flex w-[21px] flex-col items-center bg-[#f1f1f1] py-[9px]">
          <svg viewBox="0 0 10 5" className="h-[5px] w-[10px]"><path d="M0 5l5-5 5 5z" fill="#505050" /></svg>
          <div className="mt-[685px] h-[146px] w-[17px] bg-[#c1c1c1]" />
          <svg viewBox="0 0 10 5" className="mt-auto h-[5px] w-[10px]"><path d="M0 0h10L5 5z" fill="#505050" /></svg>
        </div>
        <div className="absolute bottom-0 left-0 h-[27px] w-[417px] rounded-tr-[5px] bg-[#e3dbd8] pl-[5.500px] text-[14.500px] leading-[28px] tracking-[-0.165px] whitespace-nowrap text-[#333] shadow">
          https://gray-dune-09957e410.1.azurestaticapps.net/#contact
        </div>
      </div>
      <Taskbar />
    </div>
  );
}
